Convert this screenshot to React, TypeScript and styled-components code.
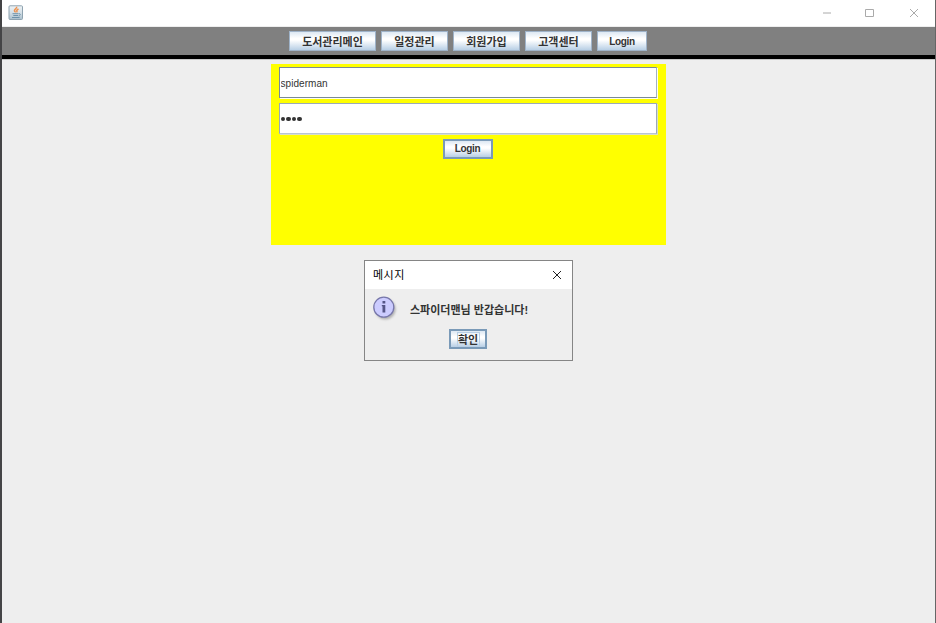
import React from "react";
import styled, { createGlobalStyle } from "styled-components";

const GlobalStyle = createGlobalStyle`
  * { box-sizing: border-box; }
  body { margin: 0; background: #eeeeee; overflow: hidden; }
  button, input { font: inherit; color: inherit; border-radius: 0; outline: none; }
`;

const Window = styled.div`
  position: relative;
  width: 936px;
  height: 623px;
  display: flex;
  flex-direction: column;
  background: #eeeeee;
  border-left: 2px solid #444446;
  border-right: 1px solid #666666;
  font-family: "Liberation Sans", "Noto Sans CJK KR", sans-serif;
  font-size: 11px;
  color: #333333;
`;

const TitleBar = styled.header`
  display: flex;
  align-items: flex-start;
  justify-content: space-between;
  height: 27px;
  flex: none;
  padding: 5px 15px 0 6px;
  background: #ffffff;
  border-bottom: 1px solid #eeeeee;
`;

const WindowControls = styled.svg`
  display: block;
  margin-top: 2px;
`;

const Icon = styled.svg`
  display: block;
`;

const NavBar = styled.nav`
  display: flex;
  justify-content: center;
  gap: 5px;
  height: 32px;
  flex: none;
  padding: 4px 1px 0 0;
  background: #808080;
  border-bottom: 4px solid #000000;
`;

const Button = styled.button<{ $width: number; $strong?: boolean }>`
  display: flex;
  align-items: center;
  justify-content: center;
  flex: none;
  width: ${(p) => p.$width}px;
  height: 20px;
  padding: 0;
  border: ${(p) => (p.$strong ? "2px solid #7a9ab8" : "1px solid #9fb3c9")};
  background: linear-gradient(#dde8f3 0%, #ffffff 35%, #ffffff 45%, #b8cfe5 100%);
  font-weight: 700;
  line-height: 14px;
  white-space: nowrap;
`;

const Label = styled.span<{ $spacing?: number; $size?: number; $drop?: number }>`
  padding-top: ${(p) => p.$drop ?? 0}px;
  font-size: ${(p) => p.$size ?? 11}px;
  letter-spacing: ${(p) => p.$spacing ?? 0}px;
`;

const Content = styled.main`
  display: flex;
  flex-direction: column;
  align-items: center;
  border-top: 1px solid #c8c8c8;
  padding: 4px 1px 0 0;
`;

const LoginPanel = styled.form`
  display: flex;
  flex-direction: column;
  align-items: center;
  gap: 5px;
  width: 395px;
  height: 181px;
  padding: 3px 1px 0 0;
  background: #ffff00;
`;

const Field = styled.input`
  width: 378px;
  height: 31px;
  flex: none;
  padding: 1px 1px 0;
  border: 1px solid #7a8a99;
  border-right-color: #9fb2c5;
  background: #ffffff;
  box-shadow: 1px 1px 0 #fffff0;
  font-size: 10px;
  letter-spacing: 0.05px;
`;

const PasswordField = styled.div`
  display: flex;
  align-items: center;
  gap: 1px;
  width: 378px;
  height: 31px;
  flex: none;
  padding: 1px 1px 0;
  border: 1px solid #9aa9b8;
  border-bottom-color: #b8c5d5;
  background: #ffffff;
  box-shadow: 1px 1px 0 #d8dfc8;
`;

const Dot = styled.i`
  width: 4.5px;
  height: 4.5px;
  border-radius: 50%;
  background: #333333;
`;

const Dialog = styled.section`
  position: absolute;
  left: 362px;
  top: 260px;
  width: 209px;
  height: 101px;
  display: flex;
  flex-direction: column;
  background: #eeeeee;
  border: 1px solid #858585;
`;

const DialogTitle = styled.div`
  display: flex;
  align-items: center;
  justify-content: space-between;
  height: 28px;
  flex: none;
  padding: 0 10px 0 8px;
  background: #ffffff;
  color: #000000;
`;

const Caption = styled(Label)`
  padding-bottom: 2px;
`;

const Message = styled.div`
  display: flex;
  align-items: center;
  gap: 11px;
  height: 40px;
  flex: none;
  padding-left: 7px;
  font-weight: 700;
  white-space: nowrap;
`;

const Actions = styled.div`
  display: flex;
  justify-content: center;
  padding-right: 1px;
`;

const FocusLabel = styled(Label)`
  display: block;
  height: 15px;
  width: 23px;
  border: 1px solid #b8cfe5;
  line-height: 14px;
`;

const menu = [
  { text: "도서관리메인", width: 87 },
  { text: "일정관리", width: 67 },
  { text: "회원가입", width: 67 },
  { text: "고객센터", width: 67 },
];

const JavaIcon = () => (
  <Icon width="16" height="16" viewBox="0 0 16 16" fill="none">
    <defs>
      <linearGradient id="tile" x2="0" y2="1">
        <stop stopColor="#eef3f6" />
        <stop offset=".5" stopColor="#d5e0e7" />
        <stop offset="1" stopColor="#a9bfcc" />
      </linearGradient>
    </defs>
    <rect x="1" y="0.8" width="13.5" height="13.7" rx="1" fill="url(#tile)" stroke="#8fa3b0" />
    <path d="M8.500 1.800c1.200 1.600-3.400 2.600-1.700 4.600l.8 1M10.500 4c-1.800.9-2.300 1.700-1.200 3.300" stroke="#ee9350" strokeWidth="1.500" />
    <path d="M4.500 8.700h6M5.300 10.500h4.900M10.800 8.700c2.300-.3 1.600 1.900 0 2.300M4 12.500h7.600" stroke="#6f93ab" strokeWidth="1" />
  </Icon>
);

const InfoIcon = () => (
  <Icon width="27" height="28" viewBox="0 0 27 28">
    <defs>
      <filter id="soft" x="-30%" y="-30%" width="160%" height="160%">
        <feGaussianBlur stdDeviation="1" />
      </filter>
    </defs>
    <circle cx="13.300" cy="14.200" r="10.400" fill="#777" opacity=".5" filter="url(#soft)" />
    <circle cx="11.800" cy="12.200" r="10" fill="#ccccff" stroke="#7777aa" strokeWidth="1.300" />
    <path d="M10.500 6h2.800v2.400h-2.800zM9.800 10h3.500v7.500h-2.800v-6.300h-.7z" fill="#555588" />
  </Icon>
);

export default function App() {
  return (
    <>
      <GlobalStyle />
      <Window>
        <TitleBar>
          <JavaIcon />
          <WindowControls width="98" height="12" viewBox="0 0 98 12" fill="none" stroke="#aaaaaa">
            <path d="M1 6h8" />
            <path d="M43.500 2.500h8v7h-8z" />
            <path d="M88 2l8 8m0-8-8 8" />
          </WindowControls>
        </TitleBar>
        <NavBar>
          {menu.map((item) => (
            <Button key={item.text} $width={item.width}>
              <Label $drop={1}>{item.text}</Label>
            </Button>
          ))}
          <Button $width={50}>
            <Label $size={10} $spacing={-0.3} $drop={1}>Login</Label>
          </Button>
        </NavBar>
        <Content>
          <LoginPanel onSubmit={(e) => e.preventDefault()}>
            <Field defaultValue="spiderman" spellCheck={false} />
            <PasswordField>
              <Dot /><Dot /><Dot /><Dot />
            </PasswordField>
            <Button $width={50} $strong>
              <Label $size={10} $spacing={-0.3}>Login</Label>
            </Button>
          </LoginPanel>
        </Content>
        <Dialog>
          <DialogTitle>
            <Caption $spacing={0.5}>메시지</Caption>
            <Icon width="10" height="10" viewBox="0 0 10 10" fill="none" stroke="#222222">
              <path d="M1 1l8 8m0-8-8 8" />
            </Icon>
          </DialogTitle>
          <Message>
            <InfoIcon />
            <Label>스파이더맨님 반갑습니다!</Label>
          </Message>
          <Actions>
            <Button $width={38} $strong>
              <FocusLabel>확인</FocusLabel>
            </Button>
          </Actions>
        </Dialog>
      </Window>
    </>
  );
}
